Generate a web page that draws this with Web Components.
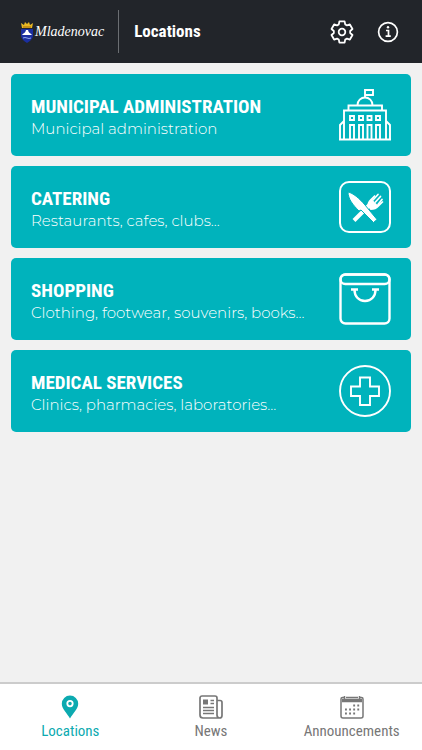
<!DOCTYPE html>
<html lang="en">
<head>
  <meta charset="utf-8">
  <meta name="viewport" content="width=device-width, initial-scale=1">
  <title>Locations</title>
  <style>
    body {
      margin: 0;
      background: #f1f1f1;
      font-family: "Roboto Condensed", "Liberation Sans Narrow", Roboto, sans-serif;
    }
  </style>
</head>
<body>
  <city-app></city-app>

  <script>
    const ICONS = {
      crest: `<svg viewBox="0 0 12 22">
        <path d="M1 7 0 2l3 2 1-3 2 2 2-2 1 3 3-2-1 5z" fill="#e9b923"/>
        <path d="M2 6h8" stroke="#a66a12"/>
        <path d="M0 8h12v6c0 4-3 6-6 8-3-2-6-4-6-8z" fill="#1b2fa0"/>
        <path d="M1 14c1-2 3-1 4-5h2c1 4 3 3 4 5z" fill="#fff"/>
        <path d="M2 17q2-1 4 0t4 0" fill="none" stroke="#8fa4e8"/>
      </svg>`,
      gear: `<svg viewBox="-12 -12 24 24" fill="none" stroke="currentColor" stroke-width="1.8" stroke-linejoin="round">
        <path d="M-3.2-7.6-2.6-10.6H2.6L3.2-7.6 4.98-6.57 7.88-7.55 10.48-3.05 8.18-1.03V1.03L10.48 3.05 7.88 7.55 4.98 6.57 3.2 7.6 2.6 10.6H-2.6L-3.2 7.6-4.98 6.57-7.88 7.55-10.48 3.05-8.18 1.03V-1.03L-10.48-3.05-7.88-7.55-4.98-6.57Z"/>
        <circle r="3.3"/>
      </svg>`,
      info: `<svg viewBox="-12 -12 24 24" fill="none" stroke="currentColor" stroke-width="1.7">
        <circle r="9.4"/>
        <path d="M-2-1.5H.5V4.2M-2.4 4.2H2.8"/>
        <circle cx="0" cy="-4.8" r="1.2" fill="currentColor" stroke="none"/>
      </svg>`,
      townhall: `<svg viewBox="0 0 52 52" fill="none" stroke="currentColor" stroke-width="1.9">
        <path d="M26 9V1H34V6H26M18.5 16a7.5 7.5 0 0 1 15 0M9.5 21V16.500H43V21M5 50V21.500H47V50M5 32 1 36V50M47 32 51 36V50"/>
        <path d="M11 27h4v4h-4zM20 27h4v4h-4zM28.500 27h4v4h-4zM37 27h4v4h-4zM11 50V36h4V50M20 50V36h4V50M28.500 50V36h4V50M37 50V36h4V50"/>
        <path d="M0 50.500H52"/>
      </svg>`,
      cutlery: `<svg viewBox="0 0 52 52">
        <rect x="1" y="1" width="50" height="50" rx="9" fill="none" stroke="currentColor" stroke-width="2"/>
        <g fill="none" stroke="currentColor">
          <path d="M15 39.500 31 23.500" stroke-width="4"/>
          <path d="m34 19 5-5.500M36.500 21l5-5.500M39 23.500l4-5" stroke-width="1.7" stroke-linecap="round"/>
        </g>
        <path d="M28.500 25c0-4 1-5 4-8l3-3 1 1-3 4 5 5 5-4 1 1-4 4c-3 3-5 4-9 4z" fill="currentColor"/>
        <path d="M9 11c5 1 11 6 17 13l12 14.500-3.500 3L22 29l-2 1C14 24 9 18 9 11z" fill="currentColor" stroke="#00b3bc" stroke-width="1"/>
      </svg>`,
      bag: `<svg viewBox="0 0 52 52" fill="none" stroke="currentColor" stroke-width="2.4">
        <rect x="1.500" y="1.500" width="49" height="49" rx="5"/>
        <rect x="1.500" y="1.500" width="49" height="9.500" rx="4.700"/>
        <path d="M12 16.500h7M33 16.500h7M15.500 17c0 6 4 11 10.500 11s10.500-5 10.500-11"/>
      </svg>`,
      medical: `<svg viewBox="0 0 52 52" fill="none" stroke="currentColor" stroke-width="1.900">
        <circle cx="26" cy="26" r="25"/>
        <path d="M21 12.500H31V21.500H40V31H31V40H21V31H12V21.500H21z"/>
      </svg>`,
      pin: `<svg viewBox="0 0 24 24">
        <path fill="currentColor" fill-rule="evenodd" d="M12 .5A8.200 8.200 0 0 0 3.800 8.700C3.800 14 9 18 12 23.500 15 18 20.200 14 20.200 8.700A8.200 8.200 0 0 0 12 .5zM12 5a3.600 3.600 0 1 1 0 7.200A3.600 3.600 0 0 1 12 5zm0 1.800a1.800 1.800 0 1 0 0 3.600 1.800 1.800 0 0 0 0-3.600z"/>
      </svg>`,
      news: `<svg viewBox="0 0 24 24" fill="none" stroke="currentColor" stroke-width="1.700">
        <path d="M18 20V3a2 2 0 0 0-2-2H3a2 2 0 0 0-2 2V20a3 3 0 0 0 3 3H20.500a2.500 2.500 0 0 0 2.500-2.500V7.500a2 2 0 0 0-2-2H18V20a3 3 0 0 0 2.500 3"/>
        <path d="M11.500 5.500H15M11.500 8.500H15M4 12.500H15M4 15.500H15M4 18.500H15" stroke-width="1.500"/>
        <path d="M4 4.500h5v5H4z" fill="currentColor" stroke="none"/>
      </svg>`,
      calendar: `<svg viewBox="0 0 24 24" fill="none" stroke="currentColor" stroke-width="1.500">
        <path d="M4 2.500H2.500A1.500 1.500 0 0 0 1 4V21a2 2 0 0 0 2 2H21a2 2 0 0 0 2-2V4a1.500 1.500 0 0 0-1.500-1.500H20M6 2.500H18"/>
        <path d="M2 5.500H22" stroke-width="3.500"/>
        <path d="M4.500 1V4M19.500 1V4"/>
        <path d="M13.200 10.500h6M5 14.500h14.500M5 18.500h10.500" stroke-width="1.900" stroke-dasharray="1.900 2.200"/>
      </svg>`,
    };

    class CityIcon extends HTMLElement {
      constructor() {
        super();
        this.attachShadow({ mode: "open" });
      }

      connectedCallback() {
        this.shadowRoot.innerHTML = `
          <style>
            :host {
              display: block;
              flex: none;
              width: 24px;
              height: 24px;
            }

            svg {
              display: block;
              width: 100%;
              height: 100%;
            }
          </style>
          ${ICONS[this.getAttribute("name")]}
        `;
        this.shadowRoot.querySelector("svg").setAttribute("aria-hidden", "true");
      }
    }

    customElements.define("city-icon", CityIcon);

    class CityHeader extends HTMLElement {
      constructor() {
        super();
        this.attachShadow({ mode: "open" });
        this.shadowRoot.innerHTML = `
          <style>
            :host {
              display: block;
              background: #22252a;
              color: #fff;
            }

            header {
              display: flex;
              align-items: center;
              height: 63px;
              padding: 0 22px 0 21px;
            }

            .brand {
              display: flex;
              align-items: center;
              gap: 2px;
              padding-right: 14px;
              color: inherit;
              text-decoration: none;
              font: italic 14px/20px "Brush Script MT", Z003, "URW Chancery L", "Liberation Serif", serif;
            }

            .brand city-icon {
              width: 12px;
              height: 22px;
            }

            h1 {
              flex: 1;
              margin: 0;
              padding-left: 15px;
              border-left: 1px solid #6b6e72;
              font-size: 17px;
              font-weight: 700;
              line-height: 43px;
            }

            nav {
              display: flex;
              gap: 22px;
            }

            button {
              padding: 0;
              border: none;
              background: none;
              color: inherit;
              cursor: pointer;
            }
          </style>

          <header>
            <a class="brand" href="#home"><city-icon name="crest"></city-icon>Mladenovac</a>
            <h1><slot></slot></h1>
            <nav>
              <button type="button" aria-label="Settings"><city-icon name="gear"></city-icon></button>
              <button type="button" aria-label="Information"><city-icon name="info"></city-icon></button>
            </nav>
          </header>
        `;
      }
    }

    customElements.define("city-header", CityHeader);

    class LocationCard extends HTMLElement {
      constructor() {
        super();
        this.attachShadow({ mode: "open" });
      }

      connectedCallback() {
        this.shadowRoot.innerHTML = `
          <style>
            :host {
              display: block;
            }

            a {
              display: flex;
              align-items: center;
              justify-content: space-between;
              min-height: 82px;
              padding: 0 20px;
              border-radius: 5px;
              background: #00b3bc;
              color: #fff;
              text-decoration: none;
            }

            div {
              padding-top: 6px;
            }

            h2 {
              margin: 0;
              font-size: 19px;
              font-weight: 700;
              line-height: 22px;
            }

            p {
              margin: 0;
              font: 300 15px/22px Montserrat, Inter, sans-serif;
            }

            city-icon {
              width: 52px;
              height: 52px;
            }
          </style>

          <a href="#${this.getAttribute("icon")}">
            <div>
              <h2><slot name="title"></slot></h2>
              <p><slot></slot></p>
            </div>
            <city-icon name="${this.getAttribute("icon")}"></city-icon>
          </a>
        `;
      }
    }

    customElements.define("location-card", LocationCard);

    class TabItem extends HTMLElement {
      constructor() {
        super();
        this.attachShadow({ mode: "open" });
      }

      connectedCallback() {
        this.shadowRoot.innerHTML = `
          <style>
            :host {
              display: block;
              color: #777;
            }

            :host([active]) {
              color: #0caab0;
            }

            a {
              display: flex;
              flex-direction: column;
              align-items: center;
              gap: 2px;
              padding: 11px 0 8px;
              color: inherit;
              font-size: 15px;
              line-height: 21px;
              text-decoration: none;
            }
          </style>

          <a href="#${this.getAttribute("icon")}">
            <city-icon name="${this.getAttribute("icon")}"></city-icon>
            <slot></slot>
          </a>
        `;
      }
    }

    customElements.define("tab-item", TabItem);

    class CityApp extends HTMLElement {
      constructor() {
        super();
        this.attachShadow({ mode: "open" });
        this.shadowRoot.innerHTML = `
          <style>
            :host {
              display: flex;
              flex-direction: column;
              min-height: 100vh;
            }

            main {
              display: flex;
              flex: 1;
              flex-direction: column;
              gap: 10px;
              padding: 11px;
            }

            nav {
              display: grid;
              grid-template-columns: repeat(3, 1fr);
              border-top: 2px solid #ccc;
              background: #fff;
            }
          </style>

          <city-header>Locations</city-header>
          <main>
            <location-card icon="townhall"><span slot="title">MUNICIPAL ADMINISTRATION</span>Municipal administration</location-card>
            <location-card icon="cutlery"><span slot="title">CATERING</span>Restaurants, cafes, clubs...</location-card>
            <location-card icon="bag"><span slot="title">SHOPPING</span>Clothing, footwear, souvenirs, books...</location-card>
            <location-card icon="medical"><span slot="title">MEDICAL SERVICES</span>Clinics, pharmacies, laboratories...</location-card>
          </main>
          <nav>
            <tab-item icon="pin" active>Locations</tab-item>
            <tab-item icon="news">News</tab-item>
            <tab-item icon="calendar">Announcements</tab-item>
          </nav>
        `;
      }
    }

    customElements.define("city-app", CityApp);
  </script>
</body>
</html>
